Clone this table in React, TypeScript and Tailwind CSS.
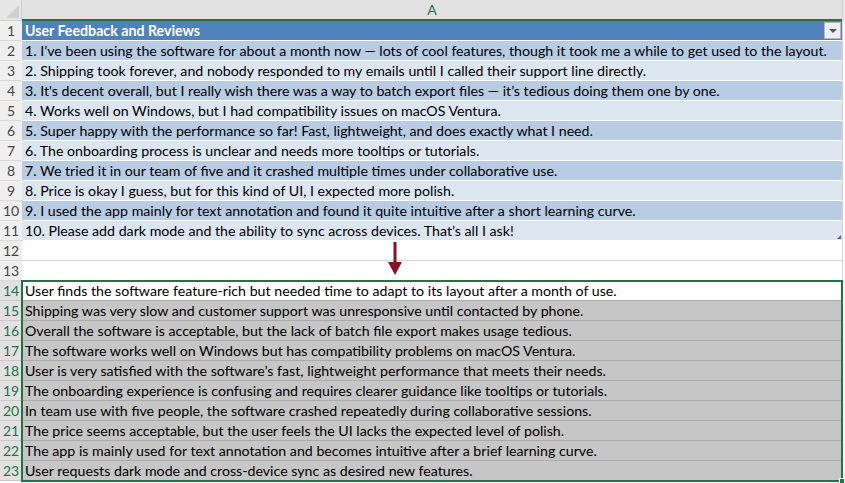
const feedback = [
  "1. I’ve been using the software for about a month now — lots of cool features, though it took me a while to get used to the layout.",
  "2. Shipping took forever, and nobody responded to my emails until I called their support line directly.",
  "3. It's decent overall, but I really wish there was a way to batch export files — it’s tedious doing them one by one.",
  "4. Works well on Windows, but I had compatibility issues on macOS Ventura.",
  "5. Super happy with the performance so far! Fast, lightweight, and does exactly what I need.",
  "6. The onboarding process is unclear and needs more tooltips or tutorials.",
  "7. We tried it in our team of five and it crashed multiple times under collaborative use.",
  "8. Price is okay I guess, but for this kind of UI, I expected more polish.",
  "9. I used the app mainly for text annotation and found it quite intuitive after a short learning curve.",
  "10. Please add dark mode and the ability to sync across devices. That’s all I ask!",
];

const summaries = [
  "User finds the software feature-rich but needed time to adapt to its layout after a month of use.",
  "Shipping was very slow and customer support was unresponsive until contacted by phone.",
  "Overall the software is acceptable, but the lack of batch file export makes usage tedious.",
  "The software works well on Windows but has compatibility problems on macOS Ventura.",
  "User is very satisfied with the software’s fast, lightweight performance that meets their needs.",
  "The onboarding experience is confusing and requires clearer guidance like tooltips or tutorials.",
  "In team use with five people, the software crashed repeatedly during collaborative sessions.",
  "The price seems acceptable, but the user feels the UI lacks the expected level of polish.",
  "The app is mainly used for text annotation and becomes intuitive after a brief learning curve.",
  "User requests dark mode and cross-device sync as desired new features.",
];

function RowHeader({ n, selected }: { n: number; selected?: boolean }) {
  return (
    <div
      className={
        selected
          ? "w-[22px] shrink-0 h-full flex items-center justify-center text-[14px] text-[#217346] bg-[#e1e1e1] border-b border-[#c8c8c8]"
          : "w-[22px] shrink-0 h-full flex items-center justify-center text-[14px] text-[#444] bg-[#efefef] border-b border-[#dadada]"
      }
    >
      {n}
    </div>
  );
}

export default function App() {
  return (
    <div className="relative w-[845px] h-[483px] bg-white overflow-hidden font-['Lato',sans-serif] text-black">
      {/* column header */}
      <div className="flex h-[21px]">
        <div className="relative w-[22px] shrink-0 bg-[#e6e6e6] border-b border-r border-[#cfcfcf]">
          <div className="absolute right-[2px] bottom-[2px] w-0 h-0 border-l-[13px] border-l-transparent border-b-[13px] border-b-[#d0d0d0]" />
        </div>
        <div className="w-[820px] shrink-0 bg-[#e1e1e1] border-b-2 border-[#217346] flex items-center justify-center text-[14px] text-[#217346]">
          A
        </div>
        <div className="flex-1 bg-[#e6e6e6] border-l border-[#cfcfcf]" />
      </div>

      {/* row 1: table header */}
      <div className="flex h-[20px]">
        <RowHeader n={1} />
        <div className="w-[820px] shrink-0 bg-[#4f81bd] border-b border-white flex items-center justify-between pl-[3px] pr-[1px]">
          <span className="text-white font-bold text-[14.2px]">User Feedback and Reviews</span>
          <div className="w-[17px] h-[17px] bg-[#efefef] border border-[#b5b5b5] flex items-center justify-center">
            <div className="w-0 h-0 border-l-[4px] border-r-[4px] border-t-[4px] border-l-transparent border-r-transparent border-t-[#555]" />
          </div>
        </div>
        <div className="flex-1 border-l border-[#d4d4d4]" />
      </div>

      {/* rows 2-11: banded */}
      {feedback.map((text, i) => (
        <div key={i} className="flex h-[20px]">
          <RowHeader n={i + 2} />
          <div
            className={
              i % 2 === 0
                ? "relative w-[820px] shrink-0 bg-[#b8cce4] border-b border-white flex items-center pl-[3px] text-[14.2px] whitespace-nowrap overflow-hidden"
                : "relative w-[820px] shrink-0 bg-[#dce6f1] border-b border-white flex items-center pl-[3px] text-[14.2px] whitespace-nowrap overflow-hidden"
            }
          >
            {text}
            {i === feedback.length - 1 && (
              <div className="absolute right-[1px] bottom-[1px] w-0 h-0 border-l-[4px] border-l-transparent border-b-[4px] border-b-[#3f5fb5]" />
            )}
          </div>
          <div className="flex-1 border-l border-[#d4d4d4]" />
        </div>
      ))}

      {/* rows 12-13: empty */}
      {[12, 13].map((n) => (
        <div key={n} className="flex h-[20px]">
          <RowHeader n={n} />
          <div className="w-[820px] shrink-0 border-b border-[#d4d4d4]" />
          <div className="flex-1 border-l border-[#d4d4d4]" />
        </div>
      ))}

      {/* rows 14-23: selected summaries */}
      <div className="relative">
        {summaries.map((text, i) => (
          <div key={i} className="flex h-[20px]">
            <RowHeader n={i + 14} selected />
            <div
              className={
                i === 0
                  ? "w-[820px] shrink-0 bg-white border-b border-[#ababab] flex items-center pl-[3px] text-[14.2px] whitespace-nowrap overflow-hidden"
                  : "w-[820px] shrink-0 bg-[#c6c6c6] border-b border-[#ababab] flex items-center pl-[3px] text-[14.2px] whitespace-nowrap overflow-hidden"
              }
            >
              {text}
            </div>
            <div className="flex-1 border-l border-[#d4d4d4]" />
          </div>
        ))}
        <div className="absolute left-[21px] top-[-1px] w-[822px] h-[202px] border-2 border-[#217346] pointer-events-none" />
        <div className="absolute left-[839px] top-[197px] w-[6px] h-[6px] bg-[#217346] border border-white" />
      </div>

      {/* arrow between source and result */}
      <svg
        className="absolute left-[387px] top-[242px]"
        width="16"
        height="34"
        viewBox="0 0 16 34"
      >
        <rect x="6.5" y="0" width="3" height="22" fill="#8b1022" />
        <polygon points="1,20 15,20 8,33" fill="#8b1022" />
      </svg>
    </div>
  );
}
